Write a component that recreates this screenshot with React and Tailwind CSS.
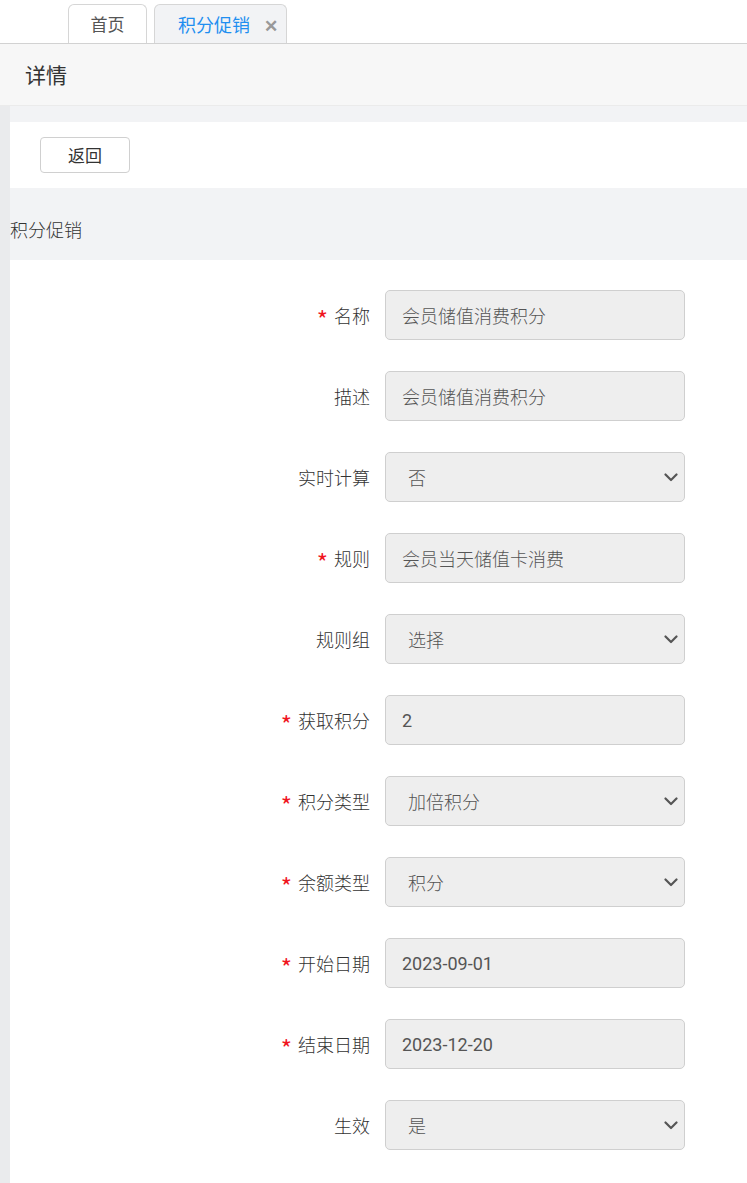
import React from 'react'

const font = { fontFamily: '"Noto Sans CJK SC", "Noto Sans", sans-serif' }

const fields = [
    { label: '名称', value: '会员储值消费积分', required: true },
    { label: '描述', value: '会员储值消费积分' },
    { label: '实时计算', value: '否', select: true },
    { label: '规则', value: '会员当天储值卡消费', required: true },
    { label: '规则组', value: '选择', select: true },
    { label: '获取积分', value: '2', required: true },
    { label: '积分类型', value: '加倍积分', select: true, required: true },
    { label: '余额类型', value: '积分', select: true, required: true },
    { label: '开始日期', value: '2023-09-01', required: true },
    { label: '结束日期', value: '2023-12-20', required: true },
    { label: '生效', value: '是', select: true },
]

const Chevron = () => (
    <svg width="14" height="9" viewBox="0 0 14 9" fill="none">
        <path d="M1.5 1.5 L7 7 L12.5 1.5" stroke="#555" strokeWidth="2.2" strokeLinecap="round" strokeLinejoin="round" />
    </svg>
)

const Field = ({ label, value, required, select }) => (
    <div className="flex items-center h-[50px]">
        <div className="w-[375px] flex justify-end items-center pr-[15px] text-[18px] text-[#333] font-light">
            {required && <span className="text-[#f0141e] mr-[6px] text-[24px] leading-none mt-[7px] font-normal">*</span>}
            <span>{label}</span>
        </div>
        <div className={`w-[300px] h-[50px] bg-[#eeeeee] border border-[#cfcfcf] rounded-[5px] flex items-center justify-between text-[18px] text-[#555] font-light ${select ? 'pl-[22px] pr-[6px]' : 'pl-[16px]'}`}>
            <span style={/\d/.test(value) ? { fontFamily: '"Roboto", "Noto Sans CJK SC", sans-serif', fontWeight: 400 } : undefined}>{value}</span>
            {select && <Chevron />}
        </div>
    </div>
)

export default function App() {
    return (
        <div className="w-[747px] min-h-[1183px] bg-white" style={font}>
            {/* tabs */}
            <div className="h-[44px] border-b border-[#d2d2d2] flex items-end pl-[68px] gap-[7px]">
                <div className="w-[79px] h-[39px] border border-b-0 border-[#d6d6d6] rounded-t-[6px] bg-white flex items-center justify-center text-[17px] text-[#555]">首页</div>
                <div className="w-[133px] h-[39px] border border-b-0 border-[#d6d6d6] rounded-t-[6px] bg-[#f2f3f5] flex items-center pl-[23px] text-[18px] text-[#1f8ff0]">
                    <span>积分促销</span>
                    <span className="ml-[14px] text-[#999] text-[17px] font-bold leading-none">✕</span>
                </div>
            </div>

            {/* header */}
            <div className="h-[62px] bg-[#f7f7f7] border-b border-[#ebebeb] flex items-center px-[25px] text-[21px] text-[#333]">详情</div>

            <div className="flex">
                <div className="w-[10px] bg-[#eaebed]" />
                <div className="flex-1 bg-[#f2f3f5] pt-[16px]">
                    <div className="h-[66px] bg-white flex items-center pl-[30px]">
                        <button className="w-[90px] h-[36px] border border-[#d0d0d0] rounded-[4px] bg-white text-[17px] text-[#333]">返回</button>
                    </div>
                    <div className="h-[72px] pt-[28px] text-[18px] text-[#333] leading-[26px] font-light">积分促销</div>
                    <div className="bg-white pt-[30px] pb-[33px] flex flex-col gap-[31px]">
                        {fields.map((f) => (
                            <Field key={f.label} {...f} />
                        ))}
                    </div>
                </div>
            </div>
        </div>
    )
}
